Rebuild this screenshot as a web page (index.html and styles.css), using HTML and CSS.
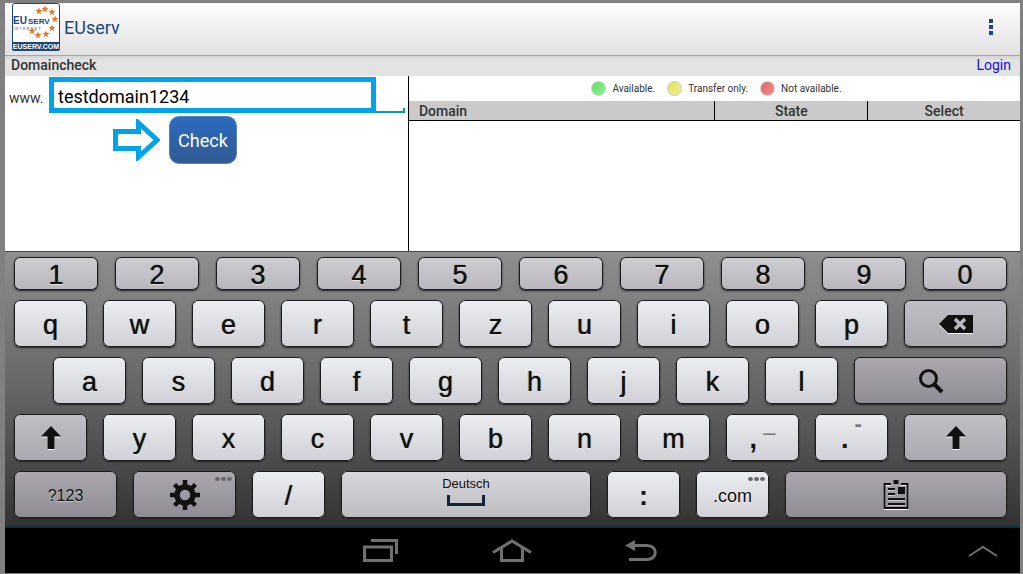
FILE: index.html
```html
<!DOCTYPE html>
<html lang="en">
<head>
    <meta charset="UTF-8">
    <meta name="viewport" content="width=device-width, initial-scale=1.0">
    <title>EUserv Domaincheck</title>
    <link rel="stylesheet" href="styles.css">
</head>
<body>
    <header class="topbar">
        <svg class="logo" viewBox="0 0 48 48" aria-hidden="true">
            <defs>
                <path id="star" d="M0-3.500 1-1.200 3.500-1 1.500.700 2.200 3.200 0 1.800-2.200 3.200-1.500.700-3.500-1-1-1.200z"/>
            </defs>
            <rect x=".5" y=".5" width="47" height="47" rx="2" fill="#fff" stroke="#1d4578"/>
            <path d="M0 39h48v7a2 2 0 0 1-2 2H2a2 2 0 0 1-2-2z" fill="#1d4578"/>
            <g fill="#e8792b">
                <use href="#star" x="27" y="8"/>
                <use href="#star" x="33" y="6"/>
                <use href="#star" x="40" y="9"/>
                <use href="#star" x="43" y="16"/>
                <use href="#star" x="40" y="25"/>
                <use href="#star" x="34" y="31"/>
                <use href="#star" x="26" y="32"/>
                <use href="#star" x="20" y="28"/>
            </g>
            <text class="logo-name" x="1" y="21">EU</text>
            <text class="logo-small" x="16" y="21">SERV</text>
            <text class="logo-sub" x="1" y="27">I N T E R N E T</text>
            <text class="logo-url" x="24" y="46" text-anchor="middle">EUSERV.COM</text>
        </svg>
        <h1>EUserv</h1>
        <button class="menu" type="button" aria-label="Menu">
            <span></span><span></span><span></span>
        </button>
    </header>

    <div class="subbar">
        <h2>Domaincheck</h2>
        <a href="#login">Login</a>
    </div>

    <main class="content">
        <form class="search">
            <div class="field">
                <label for="domain">www.</label>
                <input id="domain" type="text" value="testdomain1234">
                <span class="underline"></span>
            </div>
            <div class="actions">
                <svg class="arrow" viewBox="0 0 47 42" aria-hidden="true">
                    <path d="M2.500 12.500H25.500V4L44 21 25.500 38V29.500H2.500z" fill="none" stroke="#00a2e8" stroke-width="5"/>
                </svg>
                <button class="check" type="button">Check</button>
            </div>
        </form>

        <section class="results">
            <ul class="legend">
                <li><i class="dot green"></i>Available.</li>
                <li><i class="dot yellow"></i>Transfer only.</li>
                <li><i class="dot red"></i>Not available.</li>
            </ul>
            <table>
                <thead>
                    <tr><th>Domain</th><th>State</th><th>Select</th></tr>
                </thead>
            </table>
        </section>
    </main>

    <div class="keyboard">
        <div class="row numbers">
            <button type="button">1</button>
            <button type="button">2</button>
            <button type="button">3</button>
            <button type="button">4</button>
            <button type="button">5</button>
            <button type="button">6</button>
            <button type="button">7</button>
            <button type="button">8</button>
            <button type="button">9</button>
            <button type="button">0</button>
        </div>
        <div class="row">
            <button type="button">q</button>
            <button type="button">w</button>
            <button type="button">e</button>
            <button type="button">r</button>
            <button type="button">t</button>
            <button type="button">z</button>
            <button type="button">u</button>
            <button type="button">i</button>
            <button type="button">o</button>
            <button type="button">p</button>
            <button class="wide grey icon" type="button" aria-label="Delete">
                <svg width="34" height="20" viewBox="0 0 34 20">
                    <path d="M0 11 9 2H34V20H9z" fill="#fff"/>
                    <path d="M0 10 9 1H34V19H9z" fill="#111"/>
                    <path d="M16 5l10 10M26 5l-10 10" stroke="#bbb9c0" stroke-width="3.500"/>
                </svg>
            </button>
        </div>
        <div class="row indent">
            <button type="button">a</button>
            <button type="button">s</button>
            <button type="button">d</button>
            <button type="button">f</button>
            <button type="button">g</button>
            <button type="button">h</button>
            <button type="button">j</button>
            <button type="button">k</button>
            <button type="button">l</button>
            <button class="search-key dark icon" type="button" aria-label="Search">
                <svg width="26" height="26" viewBox="0 0 26 26">
                    <circle cx="10.500" cy="10.500" r="8" fill="none" stroke="#111" stroke-width="3"/>
                    <path d="M16 16l8 8" stroke="#111" stroke-width="4"/>
                </svg>
            </button>
        </div>
        <div class="row">
            <button class="grey icon" type="button" aria-label="Shift">
                <svg width="20" height="24" viewBox="0 0 20 24">
                    <path d="M10 1 20 11.500H13.500V24H6.500V11.500H0z" fill="#fff"/>
                    <path d="M10 0 20 10.500H13.500V23H6.500V10.500H0z" fill="#111"/>
                </svg>
            </button>
            <button type="button">y</button>
            <button type="button">x</button>
            <button type="button">c</button>
            <button type="button">v</button>
            <button type="button">b</button>
            <button type="button">n</button>
            <button type="button">m</button>
            <button class="bold" type="button">,<span class="alt">–</span></button>
            <button class="bold" type="button">.<span class="alt high">-</span></button>
            <button class="wide grey icon" type="button" aria-label="Shift">
                <svg width="20" height="24" viewBox="0 0 20 24">
                    <path d="M10 1 20 11.500H13.500V24H6.500V11.500H0z" fill="#fff"/>
                    <path d="M10 0 20 10.500H13.500V23H6.500V10.500H0z" fill="#111"/>
                </svg>
            </button>
        </div>
        <div class="row">
            <button class="wide dark small" type="button">?123</button>
            <button class="wide dark icon" type="button" aria-label="Settings">
                <svg width="30" height="32" viewBox="0 0 30 32">
                    <g stroke="#111" stroke-width="4.500">
                        <path d="M15 1v6M15 25v6M0 16h6M24 16h6M4.500 5.500l5 5M20.500 21.500l5 5M25.500 5.500l-5 5M9.500 21.500l-5 5"/>
                    </g>
                    <circle cx="15" cy="16" r="8" fill="none" stroke="#111" stroke-width="5.500"/>
                </svg>
                <span class="more"><i></i><i></i><i></i></span>
            </button>
            <button type="button">/</button>
            <button class="space" type="button">
                <span>Deutsch</span>
                <span class="bar"></span>
            </button>
            <button class="bold" type="button">:</button>
            <button class="com" type="button">.com<span class="more"><i></i><i></i><i></i></span></button>
            <button class="clipboard dark icon" type="button" aria-label="Clipboard">
                <svg width="26" height="30" viewBox="0 0 26 30">
                    <path d="M8 5H1.500V29H24.500V5H18" fill="none" stroke="#fff" stroke-width="2"/>
                    <path d="M8 4H1.500V28H24.500V4H18" fill="none" stroke="#111" stroke-width="2"/>
                    <path d="M5 10h7M5 15h7M5 20h17M5 25h17" stroke="#fff"/>
                    <path d="M5 9h7M5 14h7M5 19h17M5 24h17" stroke="#111" stroke-width="2"/>
                    <path d="M10.500 0h5v4h-5zM15 7h7v7h-7z" fill="#111"/>
                </svg>
            </button>
        </div>
    </div>

    <nav class="navbar">
        <button type="button" aria-label="Recent apps">
            <svg width="36" height="24" viewBox="0 0 36 24">
                <path d="M1.500 8H28.500V21.500H1.500zM8 1.500H33.500V15" fill="none" stroke="#707070" stroke-width="3"/>
            </svg>
        </button>
        <button type="button" aria-label="Home">
            <svg width="40" height="24" viewBox="0 0 40 24">
                <path d="M1 13.500 20 2 39 13.500M9.500 9V21.500H30.500V9" fill="none" stroke="#707070" stroke-width="3"/>
            </svg>
        </button>
        <button type="button" aria-label="Back">
            <svg width="32" height="24" viewBox="0 0 32 24">
                <path d="M8 6.500H22C33 6.500 33 20.500 22 20.500H4" fill="none" stroke="#707070" stroke-width="3"/>
                <path d="M0 6.500 10 1V12z" fill="#707070"/>
            </svg>
        </button>
        <button class="expand" type="button" aria-label="Expand">
            <svg width="30" height="12" viewBox="0 0 30 12">
                <path d="M1 11 15 2 29 11" fill="none" stroke="#707070" stroke-width="2"/>
            </svg>
        </button>
    </nav>
</body>
</html>
```
FILE: styles.css
```css
* {
    margin: 0;
    padding: 0;
    box-sizing: border-box;
}
body {
    display: flex;
    flex-direction: column;
    min-height: 100vh;
    padding: 3px 3px 1px 5px;
    background: #808080;
    font-family: Roboto, "Liberation Sans", sans-serif;
    color: #333;
}
button {
    border: none;
    background: none;
    font: inherit;
    cursor: pointer;
}
svg {
    display: block;
}

/* header */
.topbar {
    display: flex;
    align-items: center;
    gap: 4px;
    height: 53px;
    padding: 0 21px 4px 7px;
    background: linear-gradient(#fdfdfd, #e2e2e2);
    border-bottom: 1px solid #a5a5a5;
}
.logo {
    width: 48px;
    height: 48px;
    font-family: "Liberation Sans", sans-serif;
    font-weight: bold;
}
.logo-name {
    font-size: 10px;
    fill: #1d4578;
}
.logo-small {
    font-size: 8px;
    fill: #1d4578;
}
.logo-sub {
    font-size: 4px;
    fill: #8095b5;
}
.logo-url {
    font-size: 7px;
    fill: #fff;
}
.topbar h1 {
    flex: 1;
    font-size: 18px;
    font-weight: normal;
    color: #1d4578;
}
.menu {
    display: flex;
    flex-direction: column;
    gap: 2px;
    padding: 0 6px;
}
.menu span {
    width: 4px;
    height: 4px;
    background: #1d4578;
}
.subbar {
    display: flex;
    justify-content: space-between;
    align-items: center;
    height: 20px;
    padding: 0 9px 2px 6px;
    background: linear-gradient(#d4d4d4, #e3e3e3 4px);
    font-size: 14px;
}
.subbar h2 {
    font-size: 14px;
    font-weight: 500;
}
.subbar a {
    color: #1010e0;
    text-decoration: none;
}

/* search form and results */
.content {
    display: flex;
    flex: 1;
    background: #fff;
}
.search {
    width: 39.8%;
    padding: 1px 3px 0 4px;
    border-right: 1px solid #000;
}
.field {
    display: flex;
    align-items: center;
    height: 36px;
}
.field label {
    flex: 0 0 40px;
    padding-top: 6px;
    font-size: 14px;
}
.field input {
    flex: 1;
    min-width: 0;
    height: 36px;
    padding: 2px 4px 0;
    border: 5px solid #00a2e8;
    background: #fff;
    font-family: inherit;
    font-size: 18px;
    color: #000;
    outline: none;
}
.underline {
    align-self: flex-end;
    width: 29px;
    height: 5px;
    border-right: 2px solid #0099cc;
    border-bottom: 2px solid #0099cc;
}
.actions {
    display: grid;
    grid-template-columns: 1fr auto 1fr;
    align-items: center;
    gap: 9px;
    padding: 3px 8px 0 0;
}
.arrow {
    justify-self: end;
    width: 47px;
    height: 42px;
}
.check {
    height: 48px;
    padding: 0 8px;
    border: 1px solid #5b82b8;
    border-radius: 10px;
    background: linear-gradient(#2b6bc0, #325a92);
    font-size: 18px;
    color: #fff;
}
.results {
    flex: 1;
}
.legend {
    display: flex;
    justify-content: center;
    align-items: center;
    gap: 12px;
    height: 25px;
    padding-left: 4px;
    list-style: none;
    font-size: 10px;
}
.legend li {
    display: flex;
    align-items: center;
    gap: 6px;
}
.dot {
    width: 15px;
    height: 15px;
    border: 1px solid #ccc;
    border-radius: 50%;
}
.green {
    background: linear-gradient(135deg, #5fe05f, #94ee94);
}
.yellow {
    background: linear-gradient(135deg, #e0e060, #f0f090);
}
.red {
    background: linear-gradient(135deg, #e56060, #f09090);
}
table {
    width: 100%;
    table-layout: fixed;
    border-collapse: separate;
    border-spacing: 0;
}
th {
    width: 25%;
    height: 20px;
    border-bottom: 1px solid #000;
    background: #cacaca;
    font-size: 14px;
    line-height: 18px;
    font-weight: 500;
}
th:first-child {
    width: 50%;
    padding-left: 10px;
    text-align: left;
}
th + th {
    border-left: 1px solid #000;
}

/* keyboard */
.keyboard {
    display: flex;
    flex-direction: column;
    gap: 10px;
    padding: 5px 13px 8px 9px;
    border-top: 1px solid #444;
    background: linear-gradient(#8e8e8e, #666 50%, #333);
    font-family: "Liberation Sans", sans-serif;
}
.row {
    display: flex;
    gap: 16px;
}
.row button {
    position: relative;
    display: flex;
    flex: 73 1 0;
    justify-content: center;
    align-items: center;
    min-width: 0;
    height: 47px;
    padding-top: 3px;
    border-radius: 6px;
    background: linear-gradient(#eceef1, #d0d0d6);
    box-shadow: inset 0 0 0 1px #1c1c1c, 0 1px 2px #222;
    font-size: 27px;
    color: #111;
    text-shadow: 0 0 1px #111, 0 1px 1px #fff;
}
.numbers {
    gap: 17px;
}
.row.numbers button {
    height: 33px;
    background: linear-gradient(#cfced3, #b8b6bc);
}
.indent {
    padding-left: 39px;
}
.row .icon {
    padding-top: 0;
}
.row .wide {
    flex-grow: 103;
}
.row .grey {
    background: linear-gradient(#c0bfc5, #aba9af);
}
.row .dark {
    background: linear-gradient(#aaa8ae, #8e8c92);
}
.row .search-key {
    flex-grow: 153;
}
.row .clipboard {
    flex-grow: 222;
}
.row .small {
    font-size: 16px;
    text-shadow: 0 1px 1px #ccc;
}
.row .com {
    font-size: 18px;
    text-shadow: 0 1px 1px #fff;
}
.row .bold {
    font-weight: bold;
    text-shadow: none;
}
.row .space {
    flex-grow: 250;
    flex-direction: column;
    gap: 4px;
    padding: 0 0 8px;
    background: linear-gradient(#d8d8dc, #bcbcc0);
    font-size: 13px;
    text-shadow: none;
}
.bar {
    width: 38px;
    height: 11px;
    border: 3px solid #12263a;
    border-top: none;
}
.alt {
    padding: 0 0 12px 6px;
    font-size: 22px;
    font-weight: normal;
    color: #777;
}
.high {
    padding-bottom: 30px;
    font-weight: bold;
}
.more {
    position: absolute;
    top: 6px;
    right: 4px;
    display: flex;
    gap: 1px;
}
.more i {
    width: 5px;
    height: 4px;
    border-radius: 50%;
    background: #666;
}

/* system bar */
.navbar {
    position: relative;
    display: flex;
    justify-content: center;
    align-items: center;
    gap: 93px;
    height: 47px;
    padding-right: 5px;
    border-top: 2px solid #0a3140;
    background: #000;
}
.expand {
    position: absolute;
    right: 22px;
}
```
